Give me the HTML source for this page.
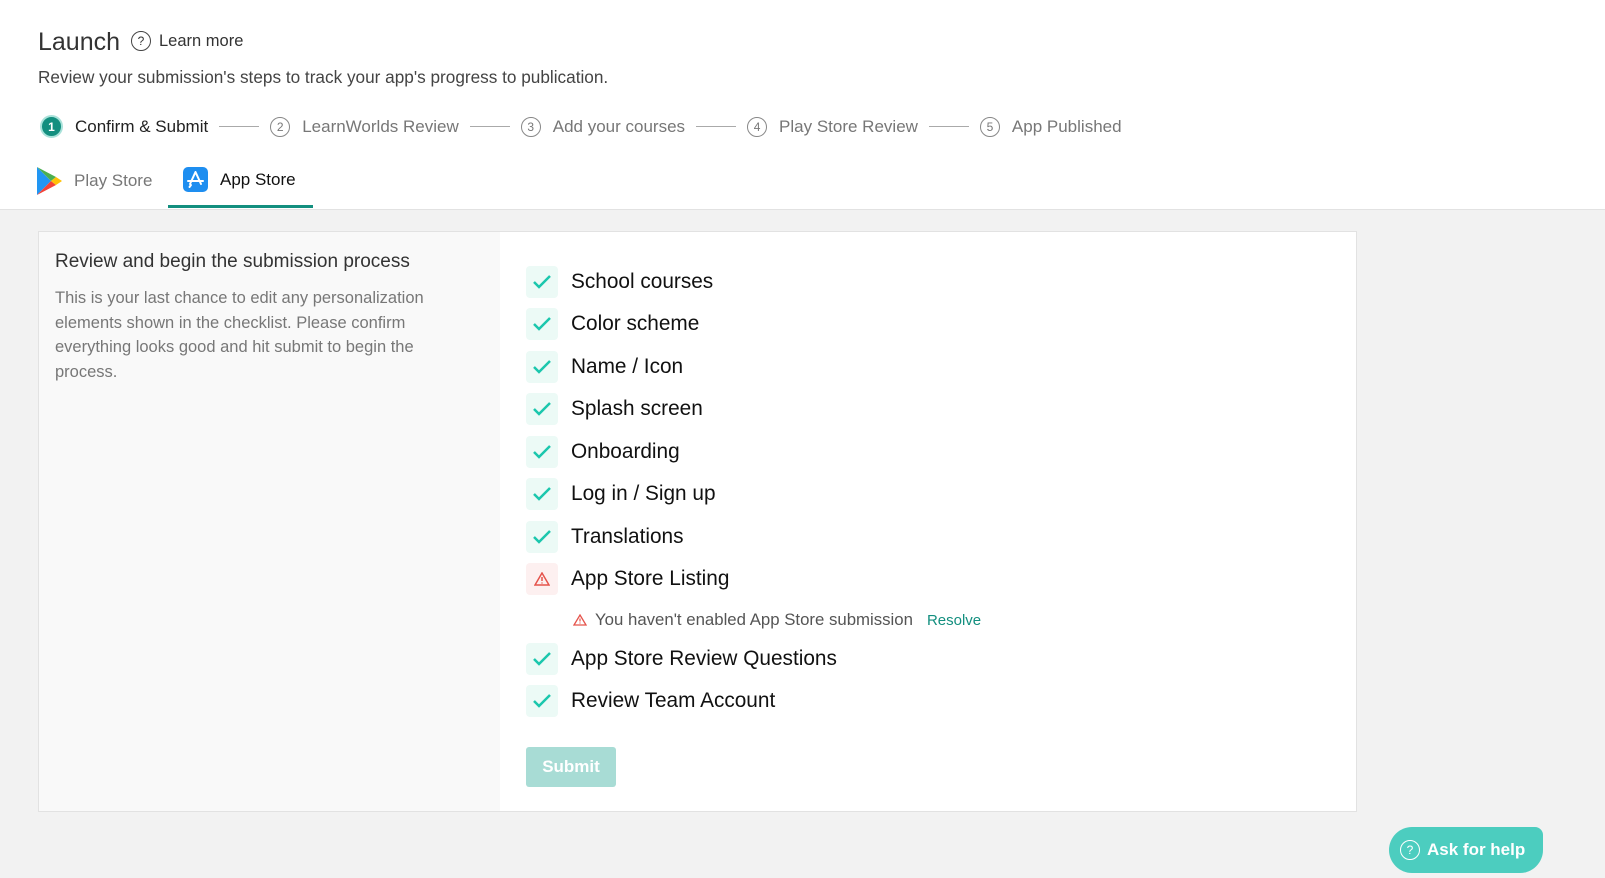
<!DOCTYPE html>
<html><head><meta charset="utf-8"><style>
*{box-sizing:border-box;margin:0;padding:0}
body{width:1605px;height:878px;overflow:hidden;background:#f2f2f2;font-family:"Liberation Sans",sans-serif;position:relative}
.top{position:absolute;left:0;top:0;width:1605px;height:210px;background:#fff;border-bottom:1px solid #e2e2e2}
.abs{position:absolute;white-space:nowrap}
.title{left:38px;top:28px;font-size:25px;color:#333}
.lm{left:131px;top:31px;font-size:16.5px;color:#333;display:flex;align-items:center;gap:8px}
.circ{display:inline-flex;width:20px;height:20px;border:1.5px solid #444;border-radius:50%;align-items:center;justify-content:center;font-size:12px}
.sub{left:38px;top:67px;font-size:17.2px;color:#444}
.steps{left:40px;top:115px;display:flex;align-items:center;font-size:17px;color:#777}
.steps .n{display:inline-flex;width:20px;height:20px;border:1px solid #888;border-radius:50%;align-items:center;justify-content:center;font-size:12px;margin-right:12px;color:#777}
.steps .n1{background:#138f7f;border:2px solid #a9e2da;color:#fff;width:23px;height:23px;font-weight:bold}
.line{width:40px;height:1px;background:#aaa;margin:0 11px}
.tab{top:167px;font-size:17px;display:flex;align-items:center;gap:12px}
.ul{left:168px;top:205px;width:145px;height:3px;background:#138f7f}
.panel{position:absolute;left:38px;top:231px;width:1319px;height:581px;border:1px solid #e2e2e2;background:#fff}
.left{position:absolute;left:0;top:0;width:461px;height:100%;background:#f9f9f9}
.lt{left:16px;top:19px;font-size:19px;color:#333}
.lb{position:absolute;left:16px;top:54px;width:420px;font-size:16.5px;line-height:24.5px;color:#777}
.item{position:absolute;left:487px;display:flex;align-items:center;font-size:20.8px;color:#111}
.ic{width:32px;height:32px;border-radius:4px;background:#ecfaf6;display:flex;align-items:center;justify-content:center;margin-right:13px}
.ic.w{background:#fdf0f0}
.warn{left:534px;top:378px;font-size:16.8px;color:#555;display:flex;align-items:center;gap:8px}
.btn{position:absolute;left:487px;top:515px;width:90px;height:40px;background:#a8dcd5;border-radius:3px;color:#fff;font-weight:bold;font-size:17px;display:flex;align-items:center;justify-content:center}
.help{position:absolute;left:1389px;top:827px;width:154px;height:46px;background:#4ccdbf;border-radius:23px 8px 23px 23px;color:#fff;font-weight:bold;font-size:17px;display:flex;align-items:center;padding-left:11px;gap:7px}
.help .circ{border-color:#fff;width:20px;height:20px;font-weight:normal}
</style></head><body>
<div class="top">
<div class="abs title">Launch</div>
<div class="abs lm"><span class="circ">?</span>Learn more</div>
<div class="abs sub">Review your submission's steps to track your app's progress to publication.</div>
<div class="abs steps">
<span class="n n1">1</span><span style="color:#222">Confirm &amp; Submit</span><span class="line"></span>
<span class="n">2</span>LearnWorlds Review<span class="line"></span>
<span class="n">3</span>Add your courses<span class="line"></span>
<span class="n">4</span>Play Store Review<span class="line"></span>
<span class="n">5</span>App Published
</div>
<div class="abs tab" style="left:37px;color:#777"><svg width="25" height="28" viewBox="0 0 25 28"><path d="M0 0L14 14L0 28Z" fill="#2196f3"/><path d="M0 0L19 10L14 14Z" fill="#4caf50"/><path d="M0 28L19 18L14 14Z" fill="#f44336"/><path d="M19 10L25 14L19 18L14 14Z" fill="#ffc107"/></svg>Play Store</div>
<div class="abs tab" style="left:183px;color:#111"><svg width="25" height="25" viewBox="0 0 25 25"><rect width="25" height="25" rx="5" fill="#1e8ef0"/><path d="M12.5 5L7 17M12.5 5L18 17M5 14h15M8 18l-1.5 2" stroke="#fff" stroke-width="2" fill="none" stroke-linecap="round"/></svg>App Store</div>
<div class="abs ul"></div>
</div>
<div class="panel">
<div class="left"><div class="abs lt">Review and begin the submission process</div>
<div class="lb">This is your last chance to edit any personalization elements shown in the checklist. Please confirm everything looks good and hit submit to begin the process.</div></div>
<div class="item" style="top:34px"><span class="ic"><svg width="20" height="16"><path d="M2 8l5 5 11-11" stroke="#1bc7ad" stroke-width="2.5" fill="none"/></svg></span>School courses</div>
<div class="item" style="top:76px"><span class="ic"><svg width="20" height="16"><path d="M2 8l5 5 11-11" stroke="#1bc7ad" stroke-width="2.5" fill="none"/></svg></span>Color scheme</div>
<div class="item" style="top:119px"><span class="ic"><svg width="20" height="16"><path d="M2 8l5 5 11-11" stroke="#1bc7ad" stroke-width="2.5" fill="none"/></svg></span>Name / Icon</div>
<div class="item" style="top:161px"><span class="ic"><svg width="20" height="16"><path d="M2 8l5 5 11-11" stroke="#1bc7ad" stroke-width="2.5" fill="none"/></svg></span>Splash screen</div>
<div class="item" style="top:204px"><span class="ic"><svg width="20" height="16"><path d="M2 8l5 5 11-11" stroke="#1bc7ad" stroke-width="2.5" fill="none"/></svg></span>Onboarding</div>
<div class="item" style="top:246px"><span class="ic"><svg width="20" height="16"><path d="M2 8l5 5 11-11" stroke="#1bc7ad" stroke-width="2.5" fill="none"/></svg></span>Log in / Sign up</div>
<div class="item" style="top:289px"><span class="ic"><svg width="20" height="16"><path d="M2 8l5 5 11-11" stroke="#1bc7ad" stroke-width="2.5" fill="none"/></svg></span>Translations</div>
<div class="item" style="top:331px"><span class="ic w"><svg width="16" height="14"><path d="M8 1L15 13H1Z" stroke="#e5534b" stroke-width="1.5" fill="none"/><path d="M8 5v4M8 10.5v1" stroke="#e5534b" stroke-width="1.5"/></svg></span>App Store Listing</div>
<div class="abs warn"><svg width="14" height="12"><path d="M7 1L13 11H1Z" stroke="#e5534b" stroke-width="1.3" fill="none"/><path d="M7 4.5v3M7 8.5v1" stroke="#e5534b" stroke-width="1.2"/></svg>You haven't enabled App Store submission <span style="color:#138f7f;font-size:15px;margin-left:6px">Resolve</span></div>
<div class="item" style="top:411px"><span class="ic"><svg width="20" height="16"><path d="M2 8l5 5 11-11" stroke="#1bc7ad" stroke-width="2.5" fill="none"/></svg></span>App Store Review Questions</div>
<div class="item" style="top:453px"><span class="ic"><svg width="20" height="16"><path d="M2 8l5 5 11-11" stroke="#1bc7ad" stroke-width="2.5" fill="none"/></svg></span>Review Team Account</div>
<div class="btn">Submit</div>
</div>
<div class="help"><span class="circ">?</span>Ask for help</div>
</body></html>
